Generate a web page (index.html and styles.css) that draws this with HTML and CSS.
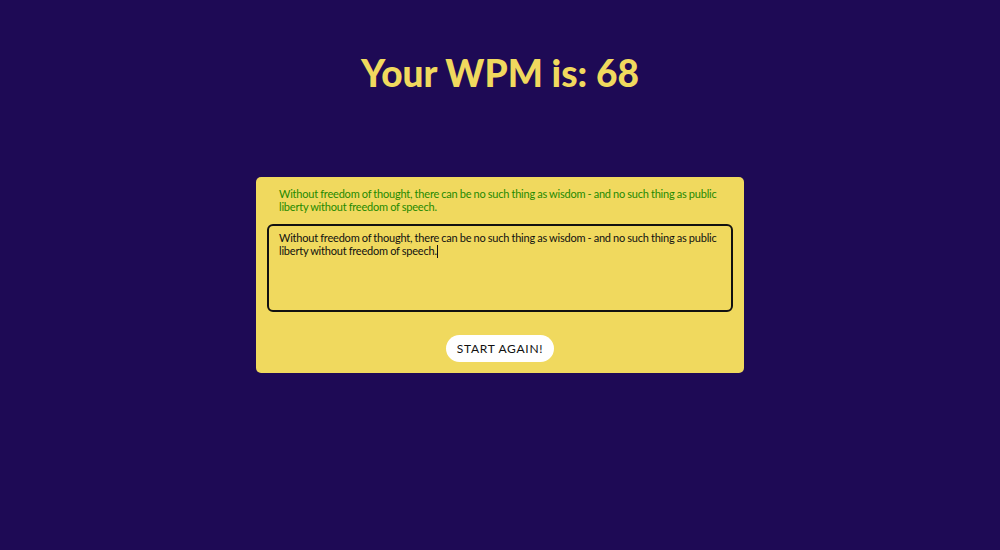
FILE: index.html
```html
<!DOCTYPE html>
<html>
<head>
<meta charset="utf-8">
<link rel="stylesheet" href="styles.css">
</head>
<body>
<main class="page">
  <h1 class="title">Your WPM is: 68</h1>
  <section class="card">
    <p class="quote">Without freedom of thought, there can be no such thing as wisdom - and no such thing as public liberty without freedom of speech.</p>
    <div class="input">Without freedom of thought, there can be no such thing as wisdom - and no such thing as public liberty without freedom of speech.<span class="caret"></span></div>
    <div class="actions">
      <button class="btn">START AGAIN!</button>
    </div>
  </section>
</main>
</body>
</html>
```
FILE: styles.css
```css
html, body {
  margin: 0;
  padding: 0;
}
body {
  background: #1e0a55;
  width: 1000px;
  height: 550px;
  overflow: hidden;
  font-family: "Lato", "Open Sans", sans-serif;
}
.page {
  display: flex;
  flex-direction: column;
  align-items: center;
  padding-top: 50px;
}
.title {
  margin: 0;
  color: #f0d95e;
  font-size: 37px;
  font-weight: 900;
  line-height: 46px;
}
.card {
  margin-top: 81px;
  width: 488px;
  box-sizing: border-box;
  background: #f0d95e;
  border-radius: 5px;
  padding: 10px 11px 11px;
}
.quote {
  margin: 0;
  padding: 0 12px;
  color: #1f8a00;
  font-size: 11px;
  letter-spacing: -0.2px;
  word-spacing: -0.4px;
  line-height: 13px;
}
.input {
  margin-top: 11px;
  height: 88px;
  box-sizing: border-box;
  border: 2px solid #111;
  border-radius: 6px;
  padding: 5px 10px;
  color: #111;
  font-size: 11px;
  letter-spacing: -0.2px;
  word-spacing: -0.4px;
  line-height: 13px;
}
.caret {
  display: inline-block;
  width: 1px;
  height: 13px;
  background: #111;
  vertical-align: -3px;
}
.actions {
  display: flex;
  justify-content: center;
  margin-top: 23px;
}
.btn {
  border: none;
  background: #fff;
  border-radius: 14px;
  height: 27px;
  width: 108px;
  padding: 0;
  font-family: "Lato", sans-serif;
  font-size: 12px;
  letter-spacing: 0.7px;
  color: #111;
}
```
